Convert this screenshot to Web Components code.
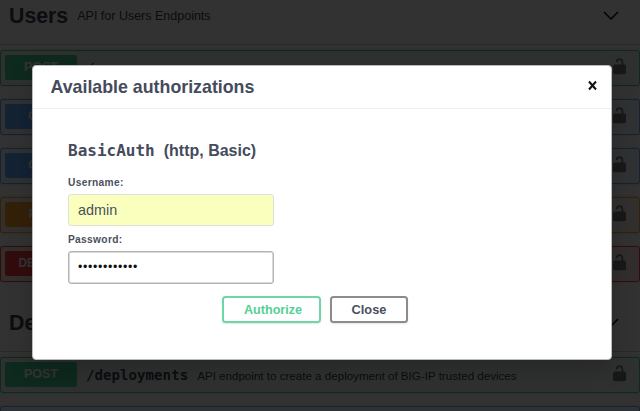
<!DOCTYPE html>
<html lang="en"><head><meta charset="utf-8"><title>Available authorizations</title>
<style>
html,body{margin:0;height:411px;overflow:hidden;background:#fafafa}
body{font-family:"Liberation Sans",Arial,sans-serif;color:#3b4151}
</style></head><body>
<api-page></api-page>
<script>
const define=(name,html)=>customElements.define(name,class extends HTMLElement{
  connectedCallback(){
    if(this.shadowRoot)return;
    const t=document.createElement('template');
    t.innerHTML=typeof html==='function'?html(this):html;
    this.attachShadow({mode:'open'}).append(t.content.cloneNode(true));
  }
});
define('tag-header',`<style>
:host{display:flex;box-sizing:border-box;height:58px;padding:0 21.5px 0 9px;align-items:center;border-bottom:1px solid #c8c8cb;margin-bottom:5px}
.t{font-size:21.3px;font-weight:700;line-height:24px;margin-right:9px}
.d{font-size:12.5px;flex:1;line-height:16px}
svg{width:16px;height:10px;display:block}
</style><span class="t"><slot></slot></span><span class="d"><slot name="desc"></slot></span>
<svg viewBox="0 0 16 10"><path d="M1 1 8 8 15 1" fill="none" stroke="#000" stroke-width="1.5"/></svg>`);
define('lock-icon',`<style>:host{display:block;width:13px;height:17px;margin-bottom:3px}svg{display:block}</style>
<svg width="13" height="17" viewBox="0 0 13 17"><rect x="0" y="6.5" width="13" height="9.8" rx="1.8" fill="#777"/><path d="M3.6 4.3C3.9 0 9.4 0 9.4 4V7.5" fill="none" stroke="#777" stroke-width="1.8"/></svg>`);
define('api-operation',el=>`<style>
:host{--c:${({POST:'#49cc90',GET:'#61affe',PUT:'#fca130',DELETE:'#f93e3e'})[el.getAttribute('method')]};
display:flex;box-sizing:border-box;height:36px;align-items:center;padding:0 13px 0 4px;margin-bottom:13px;border:1px solid var(--c);border-radius:3px;background:color-mix(in srgb,var(--c) 10%,#fafafa);box-shadow:0 0 3px rgba(0,0,0,.19)}
b{width:72px;height:25px;line-height:25px;border-radius:2px;background:var(--c);color:#fff;text-align:center;font-size:12.5px;text-shadow:0 1px 0 rgba(0,0,0,.1);margin:0 9px 1px 0}
:host([method=DELETE]) b{font-size:11.9px;text-indent:2px}
.p{font:700 14.15px/20px "DejaVu Sans Mono",monospace;margin-right:9px}
.d{font-size:11.6px;flex:1;white-space:nowrap}
</style><b>${el.hasAttribute('plain')?'':el.getAttribute('method')}</b><span class="p"><slot></slot></span><span class="d"><slot name="desc"></slot></span><lock-icon></lock-icon>`);
define('auth-field',el=>`<style>
:host{display:block}
label{display:block;font-size:10.2px;font-weight:700;line-height:12px;letter-spacing:.33px;color:#4a5060}
input{display:block;box-sizing:border-box;width:206px;height:33px;margin:5px 0 0;padding:0 9px;border:1px solid #e0e0dc;border-radius:3px;font:14.4px "Liberation Sans",sans-serif;color:#4a5060;outline:0}
:host([filled]) input{background:#faffbd;height:32px}
:host([focused]) input{border-color:#b4b4b4;box-shadow:inset 0 0 0 .5px #b4b4b4;color:#111;font-size:12.4px;letter-spacing:.66px;padding-bottom:2px}
</style><label><slot></slot></label><input type="${el.getAttribute('type')}" value="${el.getAttribute('value')}">`);
define('action-button',`<style>
:host{display:block;box-sizing:border-box;width:78px;height:27px;border:2px solid #8c8c8c;border-radius:3.5px;text-align:center;font-weight:700;font-size:12.8px;line-height:24px;color:#4a5060;box-shadow:0 1px 2px rgba(0,0,0,.1)}
:host([primary]){width:99px;border-color:#6dd7a6;color:#55cf97;padding-left:3px;font-size:12.6px}
</style><slot></slot>`);
define('auth-dialog',`<style>
:host{display:block;box-sizing:border-box;width:580px;height:295px;background:#fff;border:1px solid #bbb;border-radius:4px;box-shadow:0 8px 24px rgba(0,0,0,.2);color:#454b5b}
header{display:flex;box-sizing:border-box;height:43px;padding:0 13px 0 17.5px;align-items:center;border-bottom:1px solid #f0f0f0}
h3{margin:0;flex:1;font-size:17.8px;line-height:24px}
main{padding:31px 35px 0}
h4{display:flex;gap:9px;margin:0 0 15px;font-size:16px;line-height:22px;align-items:baseline}
code{font:700 16px/22px "DejaVu Sans Mono",monospace}
auth-field+auth-field{margin-top:8px}
.b{display:flex;gap:9px;padding:12px 0 0 154px}
svg{width:11px;height:11px;margin-bottom:4px}
</style><header><h3>Available authorizations</h3><svg viewBox="0 0 11 11"><path d="M2 1.5 9 9.5M9 1.5 2 9.5" stroke="#111" stroke-width="2"/></svg></header>
<main><h4><code>BasicAuth</code><span>(http, Basic)</span></h4>
<auth-field type="text" value="admin" filled>Username:</auth-field>
<auth-field type="password" value="abcdefghijkl" focused>Password:</auth-field>
<div class="b"><action-button primary>Authorize</action-button><action-button>Close</action-button></div></main>`);
define('api-page',`<style>
:host{display:block;position:relative;width:640px;height:411px;overflow:hidden}
.l{height:411px;overflow:hidden}
.l tag-header:first-child{margin-top:-13px}
.l tag-header:not(:first-child){height:57px}
.o{position:absolute;inset:0;background:rgba(0,0,0,.8)}
auth-dialog{position:absolute;left:32px;top:65px}
</style><div class="l">
<tag-header>Users<span slot="desc">API for Users Endpoints</span></tag-header>
<api-operation method="POST">/</api-operation>
<api-operation method="GET"></api-operation>
<api-operation method="GET"></api-operation>
<api-operation method="PUT"></api-operation>
<api-operation method="DELETE"></api-operation>
<tag-header>Deployments</tag-header>
<api-operation method="POST">/deployments<span slot="desc">API endpoint to create a deployment of BIG-IP trusted devices</span></api-operation>
<api-operation method="GET" plain></api-operation>
</div><div class="o"></div><auth-dialog></auth-dialog>`);
</script></body></html>
